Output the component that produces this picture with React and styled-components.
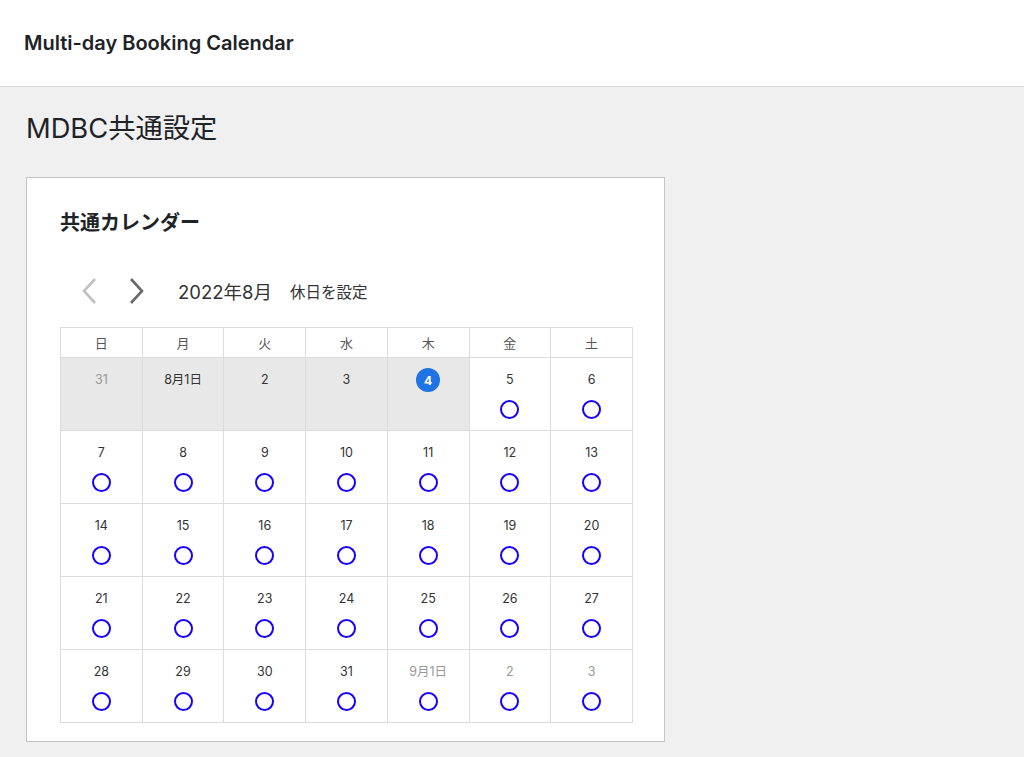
import React from "react";
import styled, { createGlobalStyle } from "styled-components";

const GlobalStyle = createGlobalStyle`
  html, body {
    margin: 0;
    padding: 0;
    background: #f0f0f1;
    font-family: "Inter", "Noto Sans CJK JP", sans-serif;
    color: #1d2327;
  }
`;

const weekdays = ["日", "月", "火", "水", "木", "金", "土"];

// each cell: label, past (greyed), today, muted (other month)
const buildWeeks = () => {
  const cells = [
    { label: "31", past: true, muted: true },
    { label: "8月1日", past: true },
    { label: "2", past: true },
    { label: "3", past: true },
    { label: "4", past: true, today: true },
  ];
  for (let d = 5; d <= 31; d++) cells.push({ label: String(d) });
  cells.push({ label: "9月1日", muted: true });
  cells.push({ label: "2", muted: true });
  cells.push({ label: "3", muted: true });
  const weeks = [];
  for (let i = 0; i < cells.length; i += 7) weeks.push(cells.slice(i, i + 7));
  return weeks;
};

const App = () => {
  const weeks = buildWeeks();
  return (
    <>
      <GlobalStyle />
      <TopBar>
        <AppTitle>Multi-day Booking Calendar</AppTitle>
      </TopBar>
      <Main>
        <PageTitle>MDBC共通設定</PageTitle>
        <Card>
          <CardTitle>共通カレンダー</CardTitle>
          <NavRow>
            <NavButton $disabled aria-label="prev">
              <svg width="18" height="28" viewBox="0 0 18 28">
                <path d="M15 2 L4 14 L15 26" fill="none" stroke="currentColor" strokeWidth="2.6" />
              </svg>
            </NavButton>
            <NavButton aria-label="next">
              <svg width="18" height="28" viewBox="0 0 18 28">
                <path d="M3 2 L14 14 L3 26" fill="none" stroke="currentColor" strokeWidth="2.6" />
              </svg>
            </NavButton>
            <MonthLabel>2022年8月</MonthLabel>
            <HolidayLink>休日を設定</HolidayLink>
          </NavRow>
          <Table>
            <thead>
              <tr>
                {weekdays.map((w) => (
                  <HeadCell key={w}>{w}</HeadCell>
                ))}
              </tr>
            </thead>
            <tbody>
              {weeks.map((week, wi) => (
                <tr key={wi}>
                  {week.map((c, ci) => (
                    <DayCell key={ci} $past={c.past}>
                      <DayInner>
                        {c.today ? (
                          <TodayBadge>{c.label}</TodayBadge>
                        ) : (
                          <DayNum $muted={c.muted}>{c.label}</DayNum>
                        )}
                        {!c.past && <OpenMark />}
                      </DayInner>
                    </DayCell>
                  ))}
                </tr>
              ))}
            </tbody>
          </Table>
        </Card>
      </Main>
    </>
  );
};

const TopBar = styled.header`
  height: 87px;
  background: #fff;
  border-bottom: 1px solid #dcdcde;
  display: flex;
  align-items: center;
  padding: 0 24px;
  box-sizing: border-box;
`;

const AppTitle = styled.h1`
  margin: 0;
  font-size: 20px;
  font-weight: 600;
  color: #1d2327;
`;

const Main = styled.main`
  padding: 22px 26px 20px;
`;

const PageTitle = styled.h2`
  margin: 0 0 28px;
  font-size: 27.3px;
  font-weight: 400;
  line-height: 40px;
  color: #1d2327;
`;

const Card = styled.section`
  width: 639px;
  box-sizing: border-box;
  background: #fff;
  border: 1px solid #c3c4c7;
  padding: 31px 32px 18px 33px;
`;

const CardTitle = styled.h3`
  margin: 0 0 40px;
  font-size: 20px;
  font-weight: 700;
  line-height: 28px;
  color: #1d2327;
`;

const NavRow = styled.div`
  display: flex;
  align-items: center;
  height: 28px;
  margin: 0 0 22px 20px;
`;

const NavButton = styled.span`
  display: inline-flex;
  width: 18px;
  height: 28px;
  margin-right: 30px;
  color: ${(p) => (p.$disabled ? "#c0c0c0" : "#6a6a6a")};
`;

const MonthLabel = styled.span`
  font-size: 18.5px;
  color: #333;
  margin-left: 2px;
  margin-right: 18px;
`;

const HolidayLink = styled.span`
  font-size: 15.5px;
  color: #333;
`;

const Table = styled.table`
  border-collapse: collapse;
  table-layout: fixed;
  width: 573px;
`;

const HeadCell = styled.th`
  height: 29px;
  border: 1px solid #dcdcdc;
  font-size: 13px;
  font-weight: 400;
  color: #555;
  padding: 0;
`;

const DayCell = styled.td`
  height: 72px;
  border: 1px solid #dcdcdc;
  padding: 0;
  vertical-align: top;
  background: ${(p) => (p.$past ? "#e8e8e8" : "#fff")};
`;

const DayInner = styled.div`
  display: flex;
  flex-direction: column;
  align-items: center;
  padding-top: 10px;
`;

const DayNum = styled.span`
  height: 24px;
  line-height: 24px;
  font-size: 12.5px;
  color: ${(p) => (p.$muted ? "#999" : "#333")};
`;

const TodayBadge = styled.span`
  width: 24px;
  height: 24px;
  border-radius: 50%;
  background: #1e74e4;
  color: #fff;
  font-size: 12px;
  font-weight: 700;
  display: flex;
  align-items: center;
  justify-content: center;
`;

const OpenMark = styled.span`
  margin-top: 8px;
  width: 15px;
  height: 15px;
  border-radius: 50%;
  border: 2.5px solid #1800ff;
`;

export default App;
